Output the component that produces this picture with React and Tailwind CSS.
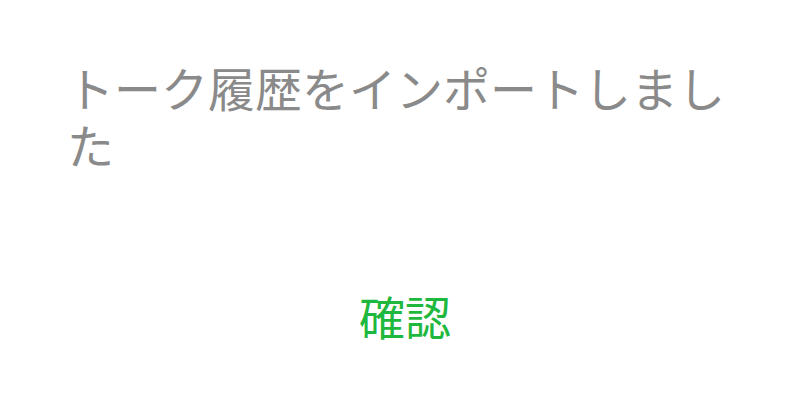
import React from "react";

const App = () => {
  return (
    <div
      className="w-[800px] h-[415px] bg-white flex flex-col"
      style={{ fontFamily: '"Noto Sans CJK JP", "Noto Sans", sans-serif' }}
    >
      <div className="pl-[67px] pr-[66px] pt-[58px] text-[47px] leading-[57px] text-[#8a8a8a]">
        トーク履歴をインポートしました
      </div>
      <div className="mt-[114px] flex justify-center">
        <button className="text-[46px] leading-[58px] text-[#1fb83e] pl-[10px]">確認</button>
      </div>
    </div>
  );
};

export default App;
